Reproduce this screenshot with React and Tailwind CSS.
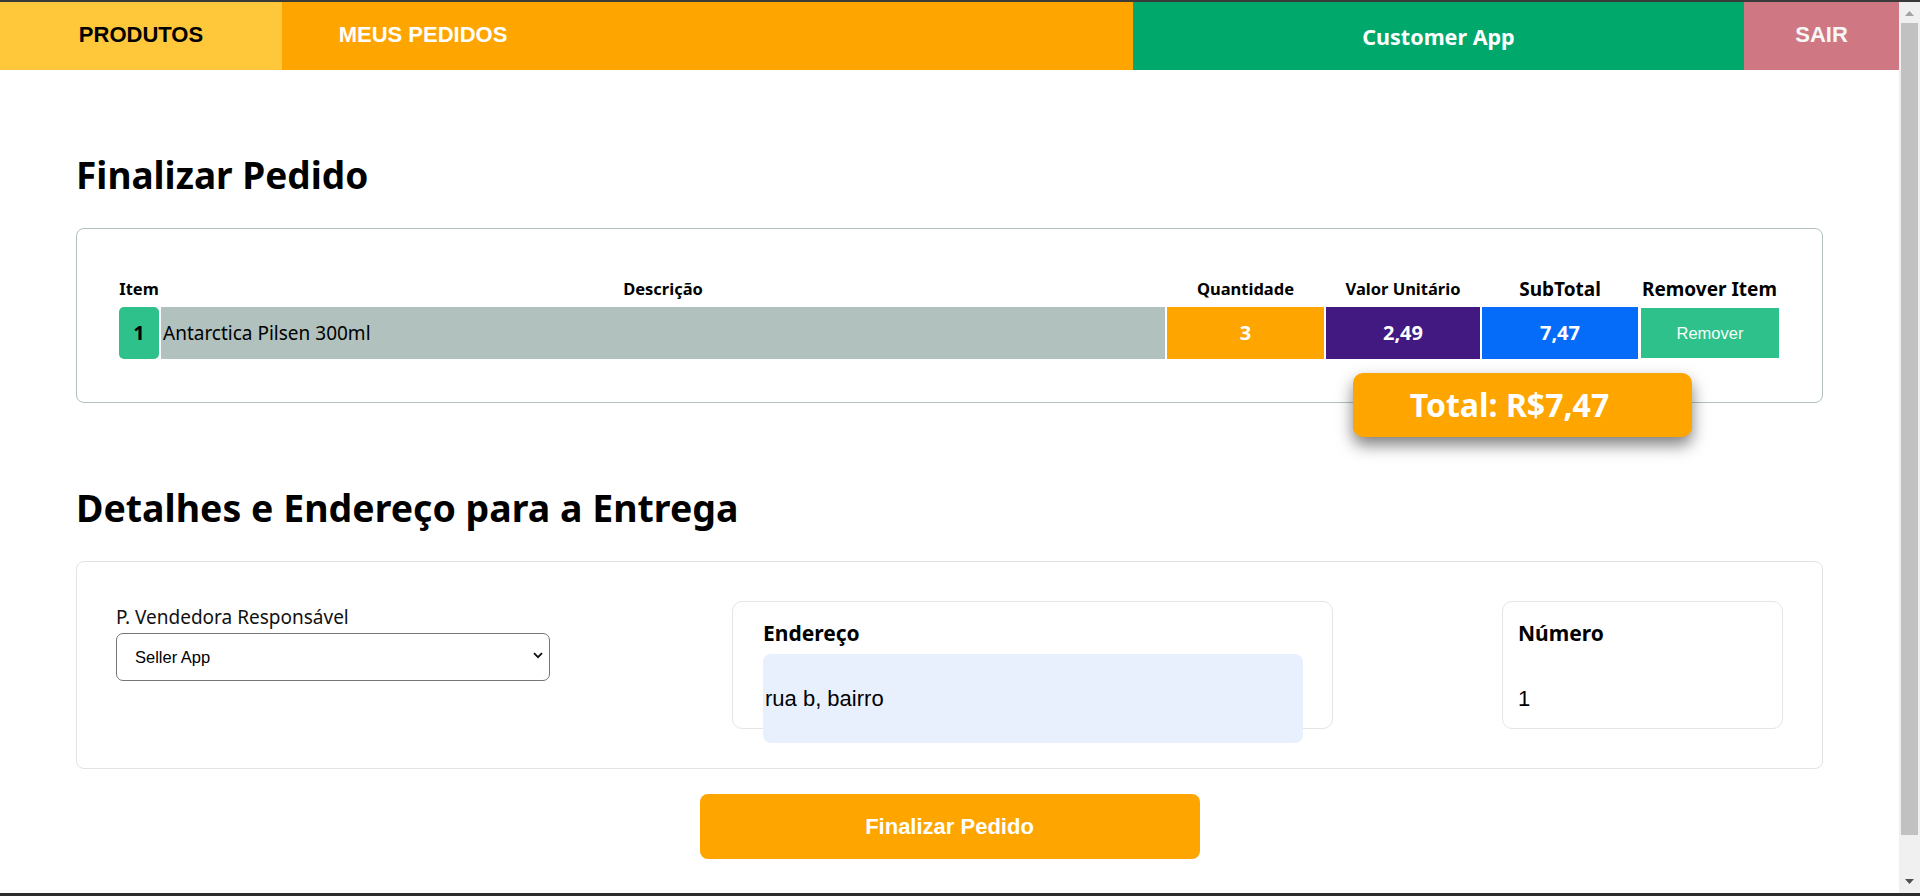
import { useState } from "react";

const SEG = "font-['Noto_Sans',sans-serif]";
const ARIAL = "font-['Liberation_Sans',Arial,sans-serif]";

const items = [
  { id: 1, name: "Antarctica Pilsen 300ml", quantity: 3, price: 2.49 },
];

const money = (n) => n.toFixed(2).replace(".", ",");

function NavBar() {
  return (
    <nav className="flex h-[68px] bg-[#FFA500]">
      <a className={`flex w-[282px] items-center justify-center bg-[#FFC73A] pb-[3px] text-[22px] font-bold text-black ${ARIAL}`}>
        PRODUTOS
      </a>
      <a className={`flex w-[282px] items-center justify-center pb-[3px] text-[22px] font-bold text-white ${ARIAL}`}>
        MEUS PEDIDOS
      </a>
      <div className="flex-1" />
      <div className={`flex w-[611px] items-center justify-center bg-[#00A86B] pt-[2px] text-[21.5px] font-bold text-white ${SEG}`}>
        Customer App
      </div>
      <a className={`flex w-[155px] items-center justify-center bg-[#D07784] pb-[3px] text-[22px] font-bold text-[#f7f7f7] ${ARIAL}`}>
        SAIR
      </a>
    </nav>
  );
}

function OrderTable({ list, onRemove }) {
  const headers = [
    { label: "Item", size: "text-[16.5px]" },
    { label: "Descrição", size: "text-[16.5px]" },
    { label: "Quantidade", size: "text-[16.5px]" },
    { label: "Valor Unitário", size: "text-[16.5px]" },
    { label: "SubTotal", size: "text-[19px]" },
    { label: "Remover Item", size: "text-[19px]" },
  ];
  return (
    <div className="rounded-[8px] border border-[#B3C0BD] pb-[43px] pl-[42px] pr-[43px] pt-[50px]">
      <div className={`grid grid-cols-[40px_1fr_157px_154px_156px_139px] gap-x-[2px] ${SEG}`}>
        {headers.map((h) => (
          <div key={h.label} className={`flex h-[20px] items-center justify-center font-bold text-black ${h.size}`}>
            {h.label}
          </div>
        ))}
        {list.map((item, i) => (
          <div key={item.id} className="contents">
            <div className="mt-[8px] flex h-[52px] items-center justify-center rounded-[5px] bg-[#2FC18C] text-[20px] font-bold text-black">
              {i + 1}
            </div>
            <div className="mt-[8px] flex h-[52px] items-center bg-[#B1C1BD] pl-[2px] text-[19px] text-black">
              {item.name}
            </div>
            <div className="mt-[8px] flex h-[52px] items-center justify-center bg-[#FFA500] text-[20px] font-bold text-white">
              {item.quantity}
            </div>
            <div className="mt-[8px] flex h-[52px] items-center justify-center bg-[#421981] text-[20px] font-bold text-white">
              {money(item.price)}
            </div>
            <div className="mt-[8px] flex h-[52px] items-center justify-center bg-[#056CF9] text-[20px] font-bold text-white">
              {money(item.price * item.quantity)}
            </div>
            <button
              type="button"
              onClick={() => onRemove(item.id)}
              className={`ml-[1px] mt-[9px] flex h-[50px] items-center justify-center bg-[#2FC18C] text-[16.5px] text-[#f4fff9] ${ARIAL}`}
            >
              Remover
            </button>
          </div>
        ))}
      </div>
    </div>
  );
}

function Scrollbar() {
  return (
    <div className="flex w-[21px] flex-col bg-[#F0F0F0]">
      <div className="flex h-[21px] items-center justify-center pt-[2px]">
        <svg width="9" height="5" viewBox="0 0 9 5">
          <polygon points="4.5,0 9,5 0,5" fill="#A3A3A3" />
        </svg>
      </div>
      <div className="mx-[2px] h-[812px] bg-[#C1C1C1]" />
      <div className="flex flex-1 items-end justify-center pb-[9px]">
        <svg width="9" height="5" viewBox="0 0 9 5">
          <polygon points="0,0 9,0 4.5,5" fill="#505050" />
        </svg>
      </div>
    </div>
  );
}

export default function App() {
  const [list, setList] = useState(items);
  const [seller, setSeller] = useState("seller");
  const [address, setAddress] = useState("rua b, bairro");
  const [number, setNumber] = useState("1");

  const total = list.reduce((acc, it) => acc + it.price * it.quantity, 0);

  return (
    <div className="flex h-[896px] flex-col overflow-hidden bg-white">
      <div className="h-[2px] bg-[#3A3A3A]" />
      <div className="flex min-h-0 flex-1">
        <div className="min-w-0 flex-1">
          <NavBar />
          <main className="px-[76px]">
            <h1 className={`mt-[85px] text-[37px] font-bold leading-[40px] text-black ${SEG}`}>
              Finalizar Pedido
            </h1>
            <div className="mt-[33px]">
              <OrderTable list={list} onRemove={(id) => setList(list.filter((x) => x.id !== id))} />
            </div>
            <div className="relative -mt-[30px] flex justify-end pr-[131px]">
              <div className={`flex h-[64px] w-[339px] items-center justify-center rounded-[10px] bg-[#FFA500] pr-[26px] text-[32px] font-bold text-white shadow-[0_8px_16px_rgba(0,0,0,0.5)] ${SEG}`}>
                Total: R${money(total)}
              </div>
            </div>

            <h2 className={`mt-[51px] text-[37.5px] font-bold leading-[40px] text-black ${SEG}`}>
              Detalhes e Endereço para a Entrega
            </h2>
            <div className="mt-[33px] flex items-start rounded-[8px] border border-[#E3E3E3] px-[39px] py-[39px]">
              <div className="w-[434px] pt-[3px]">
                <label className={`block text-[19px] leading-[26px] text-[#111] ${SEG}`}>
                  P. Vendedora Responsável
                </label>
                <div className="relative mt-[3px]">
                  <select
                    value={seller}
                    onChange={(e) => setSeller(e.target.value)}
                    className={`h-[48px] w-full appearance-none rounded-[7px] border border-[#767676] bg-white pl-[18px] text-[16.5px] text-black ${ARIAL}`}
                  >
                    <option value="seller">Seller App</option>
                  </select>
                  <svg
                    className="pointer-events-none absolute right-[7px] top-[19px]"
                    width="10"
                    height="7"
                    viewBox="0 0 10 7"
                  >
                    <path d="M1 1.2 L5 5.2 L9 1.2" fill="none" stroke="#111" strokeWidth="1.8" />
                  </svg>
                </div>
              </div>

              <div className="ml-[182px] h-[128px] w-[601px] rounded-[10px] border border-[#E5E5E5] px-[30px] pt-[18px]">
                <div className={`text-[21px] font-bold leading-[26px] text-black ${SEG}`}>Endereço</div>
                <input
                  value={address}
                  onChange={(e) => setAddress(e.target.value)}
                  className={`mt-[8px] h-[89px] w-[540px] rounded-[8px] bg-[#E8F0FE] pl-[2px] text-[22px] text-black outline-none ${ARIAL}`}
                />
              </div>

              <div className="ml-auto h-[128px] w-[281px] rounded-[10px] border border-[#E5E5E5] px-[15px] pt-[18px]">
                <div className={`text-[21px] font-bold leading-[26px] text-black ${SEG}`}>Número</div>
                <input
                  value={number}
                  onChange={(e) => setNumber(e.target.value)}
                  className={`mt-[8px] h-[89px] w-[250px] bg-transparent text-[22px] text-black outline-none ${ARIAL}`}
                />
              </div>
            </div>

            <button
              type="button"
              className={`mx-auto mt-[25px] block h-[65px] w-[500px] rounded-[8px] bg-[#FFA500] text-[22px] font-bold text-white ${ARIAL}`}
            >
              Finalizar Pedido
            </button>
          </main>
        </div>
        <Scrollbar />
      </div>
      <div className="h-[3px] bg-[#2B2B2B]" />
    </div>
  );
}
